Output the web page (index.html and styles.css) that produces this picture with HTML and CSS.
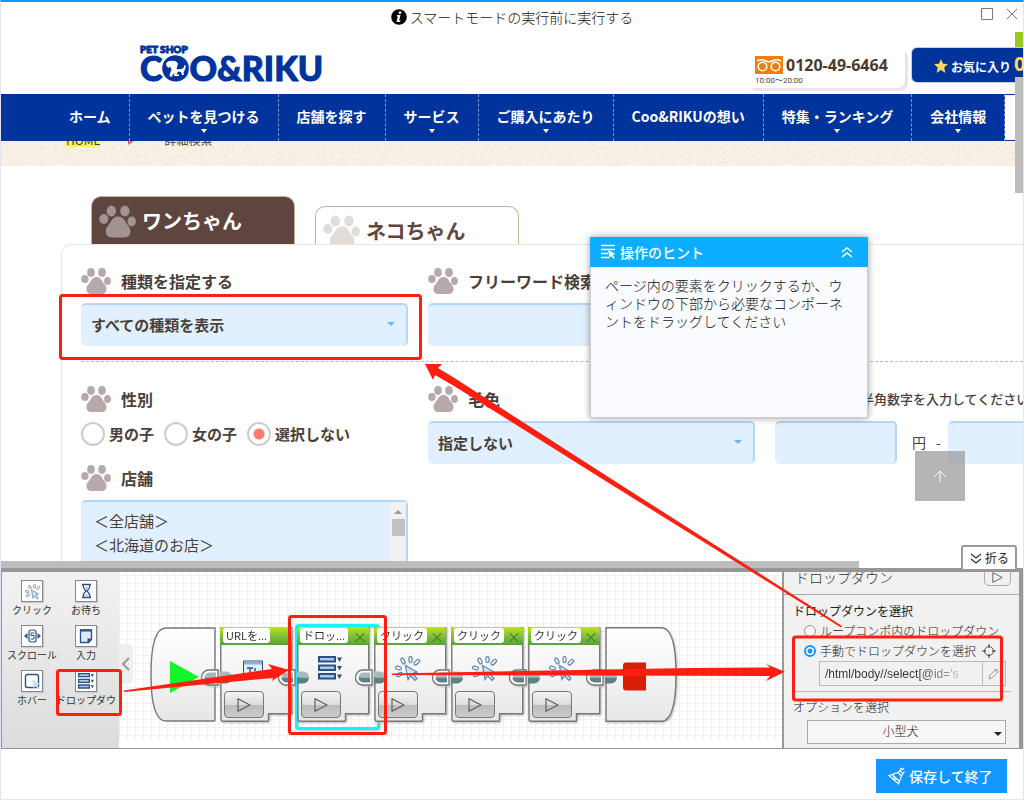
FILE: index.html
```html
<!DOCTYPE html>
<html lang="ja">
<head>
<meta charset="utf-8">
<title>スマートモードの実行前に実行する</title>
<link rel="stylesheet" href="styles.css">
</head>
<body>
<svg class="defs" aria-hidden="true">
  <defs>
    <linearGradient id="shell" x1="0" y1="0" x2="0" y2="1"><stop offset="0" stop-color="#fff"/><stop offset=".5" stop-color="#f4f4f4"/><stop offset="1" stop-color="#e6e6e6"/></linearGradient>
    <symbol id="paw" viewBox="0 0 30 26"><ellipse cx="10" cy="4.500" rx="3.800" ry="4.400"/><ellipse cx="21" cy="4.500" rx="3.800" ry="4.400"/><ellipse cx="3.900" cy="11" rx="3.700" ry="4"/><ellipse cx="26.500" cy="13" rx="3.400" ry="4"/><path d="M15.500 9c3 0 4.500 1.500 6 4.500 1.500 2.500 4 4 4 7.500 0 3.500-2 5-5 5h-10c-3 0-5-1.500-5-5 0-3.500 2.500-5 4-7.500 1.500-3 3-4.500 6-4.500z"/></symbol>
    <symbol id="click" viewBox="0 0 26 26"><g fill="#fff" stroke="#5b82b0" stroke-width="1.200"><rect x="14" y="0.600" width="3" height="6" rx="1.500"/><rect x="6.500" y="2" width="3" height="6" rx="1.500" transform="rotate(-28 8 5)"/><rect x="20.500" y="3" width="3" height="6.500" rx="1.500" transform="rotate(45 22 6)"/><rect x="2" y="9" width="3" height="6" rx="1.500" transform="rotate(-72 3.500 12)"/><rect x="3" y="15.500" width="3" height="6" rx="1.500" transform="rotate(65 4.500 18.500)"/><path fill="#d5e4f5" d="M10.500 9.500l11.500 6.500-4.500 1.500 4.500 5-2 2-4.500-5-2.500 4z"/></g></symbol>
    <symbol id="drop" viewBox="0 0 24 24"><path fill="#2c4f86" d="M0 0h18v6.500H0zM0 8.500h18V15H0zM0 17h18v6.500H0zM19 1.500h5L21.500 6zM19 10h5l-2.500 4.500zM19 18.500h5L21.500 23z"/><path fill="#aecbea" d="M2 2h14v2.500H2zM2 10.500h14V13H2zM2 19h14v2.500H2z"/></symbol>
    <symbol id="link" viewBox="0 0 32 17"><path d="M17 1H8a7.500 7.500 0 0 0 0 15h9z" fill="#fff" stroke="#777" stroke-width="1.300"/><path d="M15 3.500H8.500a5 5 0 0 0-5 5H15z" fill="#a9b8bb"/><path d="M3.500 8.500a5 5 0 0 0 5 5H15v-5z" fill="#5f8085"/><path d="M19 2.500h6a6 6 0 0 1 6 6H19z" fill="#a9b8bb"/><path d="M19 8.500h12a6 6 0 0 1-6 6h-6z" fill="#5f8085"/></symbol>
    <symbol id="block" viewBox="0 0 73 95"><path d="M.7.7h71v86H48.500v6.500q0 1-1 1H3q-2 0-2-2z" fill="url(#shell)" stroke="#777" stroke-width="1.400"/></symbol>
    <symbol id="play" viewBox="0 0 14 14"><path d="M1 .8L13 7 1 13.200z" fill="none" stroke="#555" stroke-width="1.100"/></symbol>
  </defs>
</svg>

<div class="app">
  <header class="titlebar">
    <h1 class="title"><svg width="16" height="16" viewBox="0 0 16 16"><circle cx="8" cy="8" r="7.800"/><path d="M8 2.500h2.500l-.5 2.200H7.500zM6.200 6h3.300l-1.300 5.500h1.300L9.200 13H5.500l1.300-5.500H5.800z" fill="#fff"/></svg>スマートモードの実行前に実行する</h1>
    <div class="window-buttons">
      <button aria-label="最大化"><svg width="12" height="12"><path d="M.5.5h11v11H.500z" fill="none" stroke="#777"/></svg></button>
      <button aria-label="閉じる"><svg width="12" height="12"><path d="M1 1l10 10M11 1L1 11" stroke="#777" fill="none"/></svg></button>
    </div>
  </header>

  <main class="webview">
    <div class="site-header">
      <a class="logo" href="#"><small>PET SHOP</small><span class="logo-name">CO<svg class="dog" width="26" height="26" viewBox="0 0 26 26"><circle cx="13" cy="13" r="12.500" fill="#00339b"/><path fill="#fff" d="M4 8.500Q6 5 10 6q4-1 6 2.500L14.500 14q4 1 7-1l1-3 1.500 1-1 3.500-1.500 3 .5 2.500h-2l-1-3-3-.5-1.500 3H17v1.500h-5l.5-3-2.500 2.500 1 1H7.500l.5-3 1.500-4-1.500-3-1.500 1.500L4.500 11z"/></svg>O&amp;RIKU</span></a>
      <div class="phone">
        <div class="phone-line"><svg width="28" height="18" viewBox="0 0 28 18"><path fill="#ef7f0a" d="M0 0h28v18H0z"/><g fill="none" stroke="#fff" stroke-width="1.600"><path d="M2 5q4-2.500 9 0 3 1.500 6 0 5-2.500 9 0"/><circle cx="7.500" cy="10.500" r="4.300"/><circle cx="20.500" cy="10.500" r="4.300"/></g></svg><b>0120-49-6464</b></div>
        <span class="hours">10:00〜20:00</span>
      </div>
      <a class="favorite" href="#"><svg width="14" height="14" viewBox="0 0 14 14"><path fill="#ffd95a" d="M7 0l2 4.700 5 .4-3.800 3.300L11.400 14 7 11l-4.400 3 1.200-5.600L0 5.100l5-.4z"/></svg>お気に入り<b>0</b></a>
    </div>

    <nav class="site-nav">
      <a href="#">ホーム</a><a class="more" href="#">ペットを見つける</a><a href="#">店舗を探す</a><a class="more" href="#">サービス</a><a class="more" href="#">ご購入にあたり</a><a href="#">Coo&amp;RIKUの想い</a><a class="more" href="#">特集・ランキング</a><a class="more" href="#">会社情報</a><span class="nav-end"></span>
    </nav>

    <div class="crumbs">
      <svg class="paper" width="100%" height="100%" aria-hidden="true"><filter id="grain"><feTurbulence type="fractalNoise" baseFrequency=".35" numOctaves="2"/><feColorMatrix values="0 0 0 0 .8  0 0 0 0 .68  0 0 0 0 .5  .5 .5 0 0 -.4"/></filter><rect width="100%" height="100%" filter="url(#grain)"/></svg>
      <a href="#">HOME</a><i></i><span>詳細検索</span>
    </div>

    <div class="search">
      <div class="tabs">
        <button class="tab active"><svg width="37" height="33"><use href="#paw"/></svg>ワンちゃん</button>
        <button class="tab"><svg width="37" height="33"><use href="#paw"/></svg>ネコちゃん</button>
      </div>
      <form class="panel">
        <div class="fields first">
          <div>
            <label class="heading" for="kind"><svg width="30" height="26"><use href="#paw"/></svg>種類を指定する</label>
            <div class="pick"><select id="kind" class="field"><option>すべての種類を表示</option></select></div>
          </div>
          <div>
            <label class="heading" for="word"><svg width="30" height="26"><use href="#paw"/></svg>フリーワード検索</label>
            <input id="word" class="field" type="text">
          </div>
        </div>
        <div class="fields">
          <div>
            <div class="heading"><svg width="30" height="26"><use href="#paw"/></svg>性別</div>
            <div class="radios">
              <label><input type="radio" name="sex">男の子</label>
              <label><input type="radio" name="sex">女の子</label>
              <label><input type="radio" name="sex" checked>選択しない</label>
            </div>
            <label class="heading" for="shop"><svg width="30" height="26"><use href="#paw"/></svg>店舗</label>
            <div class="list"><select id="shop" class="field" multiple><option>＜全店舗＞</option><option>＜北海道のお店＞</option></select><span class="list-scroll"><i></i></span></div>
          </div>
          <div>
            <label class="heading" for="color"><svg width="30" height="26"><use href="#paw"/></svg>毛色</label>
            <div class="pick"><select id="color" class="field"><option>指定しない</option></select></div>
          </div>
          <div>
            <label class="heading note" for="low">半角数字を入力してください</label>
            <div class="price"><input id="low" class="field" type="text"><span>円</span><span>-</span><input class="field" type="text" aria-label="上限"></div>
          </div>
        </div>
      </form>
    </div>

    <button class="to-top" aria-label="上へ"><svg width="14" height="12"><path d="M7 12V1M1 7l6-6 6 6" fill="none" stroke="#fff"/></svg></button>
    <span class="v-mark"></span><span class="v-thumb"></span>
    <button class="fold"><svg width="12" height="12"><path d="M1 1l5 4 5-4M1 6l5 4 5-4" fill="none" stroke="#333" stroke-width="1.300"/></svg>折る</button>
  </main>
  <div class="h-scroll"><span></span></div>

  <section class="editor">
    <div class="palette">
      <button><svg width="22" height="22"><use href="#click" x="3" y="3" width="16" height="16"/></svg>クリック</button>
      <button><svg width="22" height="22"><path d="M6 3.500h9M6 16.500h9M7 4c0 3.500 1.500 4.500 3 6-1.500 1.500-3 2.500-3 6M14 4c0 3.500-1.500 4.500-3 6 1.500 1.500 3 2.500 3 6" fill="none" stroke="#2c4f86" stroke-width="1.300"/><path d="M8.500 6h4L10.500 9zM8.500 15.500l2-3 2 3z" fill="#a9c6e8"/></svg>お待ち</button>
      <button><svg width="22" height="22"><rect x="7" y="4" width="7" height="12" rx="2" fill="#fff" stroke="#2c4f86" stroke-width="1.200"/><path d="M12.500 7H9v2.500h3V13H8.500" fill="none" stroke="#2c4f86"/><path d="M5.500 7v6L2 10zM15.500 7v6l3.500-3z" fill="#2c4f86"/></svg>スクロール</button>
      <button><svg width="22" height="22"><path d="M4.500 4h11v9.500l-3 3h-8z" fill="#dce9f7" stroke="#2c4f86" stroke-width="1.300"/><path d="M4 4.500h12M12.500 16.500v-3h3" fill="none" stroke="#2c4f86" stroke-width="2"/></svg>入力</button>
      <button><svg width="22" height="22"><rect x="3.500" y="3.500" width="13" height="13" rx="2" fill="#fff" stroke="#2c4f86" stroke-width="1.400"/><path d="M10 8.500l8 4.500-3 1 2.500 3.500-1.500 1-2.500-3.500-2 2.500z" fill="#c9ddf3"/></svg>ホバー</button>
      <button><svg width="22" height="22"><use href="#drop" x="2" y="2" width="16" height="16"/></svg>ドロップダウ</button>
    </div>

    <div class="canvas">
      <button class="collapse" aria-label="たたむ"><svg width="8" height="14"><path d="M7 1L1 7l6 6" fill="none" stroke="#999" stroke-width="2"/></svg></button>
      <div class="flow">
        <svg class="start" width="66" height="95"><path d="M65 1v92q0 1-1 1H16Q1 94 1 47.500 1 1 16 1z" fill="url(#shell)" stroke="#777" stroke-width="1.400"/><path d="M20 34l29 16-29 16z" fill="#12f52a"/></svg>
        <article class="node"><svg class="shell"><use href="#block"/></svg><header><span>URLを...</span></header><svg class="link"><use href="#link"/></svg><svg class="glyph" width="24" height="26"><path d="M2.500 5h19v16h-19z" fill="#e3edf8" stroke="#2c4f86"/><path d="M3 5.500h18v3H3z" fill="#8fb0d6"/><path d="M6 12h6M9 12v6M6 18h6M14 12v3M14 18h4" stroke="#2c4f86" stroke-width="1.400"/></svg><button class="run" aria-label="実行"><svg width="14" height="14"><use href="#play"/></svg></button></article>
        <article class="node selected"><svg class="shell"><use href="#block"/></svg><header><span>ドロッ...</span><button aria-label="削除">×</button></header><svg class="link"><use href="#link"/></svg><svg class="glyph" width="24" height="24"><use href="#drop"/></svg><button class="run" aria-label="実行"><svg width="14" height="14"><use href="#play"/></svg></button></article>
        <article class="node"><svg class="shell"><use href="#block"/></svg><header><span>クリック</span><button aria-label="削除">×</button></header><svg class="link"><use href="#link"/></svg><svg class="glyph" width="26" height="26"><use href="#click"/></svg><button class="run" aria-label="実行"><svg width="14" height="14"><use href="#play"/></svg></button></article>
        <article class="node"><svg class="shell"><use href="#block"/></svg><header><span>クリック</span><button aria-label="削除">×</button></header><svg class="link"><use href="#link"/></svg><svg class="glyph" width="26" height="26"><use href="#click"/></svg><button class="run" aria-label="実行"><svg width="14" height="14"><use href="#play"/></svg></button></article>
        <article class="node"><svg class="shell"><use href="#block"/></svg><header><span>クリック</span><button aria-label="削除">×</button></header><svg class="link"><use href="#link"/></svg><svg class="glyph" width="26" height="26"><use href="#click"/></svg><button class="run" aria-label="実行"><svg width="14" height="14"><use href="#play"/></svg></button></article>
        <div class="node end"><svg width="72" height="95"><path d="M1 .7h56Q71 2 71 47.500 71 93 57 94.300H1z" fill="url(#shell)" stroke="#777" stroke-width="1.400"/><path d="M21 35.500h20v28H21q-3 0-3-3v-22q0-3 3-3z" fill="#d81e06"/></svg><svg class="link"><use href="#link"/></svg></div>
      </div>
    </div>

    <aside class="props">
      <div class="props-head"><h2>ドロップダウン</h2><button aria-label="実行"><svg width="11" height="11"><use href="#play"/></svg></button></div>
      <div class="props-body">
        <p>ドロップダウンを選択</p>
        <label class="choice"><input type="radio" name="target">ループコンポ内のドロップダウン</label>
        <label class="choice"><input type="radio" name="target" checked>手動でドロップダウンを選択<svg width="14" height="14"><circle cx="7" cy="7" r="4.500" fill="none" stroke="#555"/><path d="M7 0v4M7 10v4M0 7h4M10 7h4" stroke="#333"/></svg></label>
        <div class="xpath"><input type="text" aria-label="XPath" value="/html/body//select[@id='s"><button aria-label="編集"><svg width="12" height="12"><path d="M1 11l1-4 6-6 2.500 2.500-6 6zM7 2l2.500 2.500" fill="none" stroke="#999"/></svg></button></div>
        <hr>
        <label class="opt-label" for="option">オプションを選択</label>
        <div class="pick option"><select id="option"><option>小型犬</option></select></div>
      </div>
    </aside>
  </section>

  <footer class="footer">
    <button class="save"><svg width="18" height="18" viewBox="0 0 18 18"><g fill="none" stroke="#fff" stroke-width="1.200"><path d="M1 8.500l9-3 3.500 3.500-3 8zM4.500 8l6.500 6M4 11.500l4-1M6 13l3-1.500M10 5.500l2-2 3 3-1.500 2.500M12 3.500l1-2 1.500 1 1.500-1.500M15 6.500l1.500-2"/></g></svg>保存して終了</button>
  </footer>

  <aside class="hint">
    <header><svg width="16" height="16" viewBox="0 0 16 16"><path d="M1 1.500h14M1 5.500h14M1 9.500h7M1 13.500h8" stroke="#fff" stroke-width="1.500"/><path d="M8 6l7.500 4-2.800 1 2 2.800-1.400 1-2-2.800L9.500 14z" fill="#fff"/></svg>操作のヒント<button aria-label="折りたたむ"><svg width="12" height="12"><path d="M1 6l5-4 5 4M1 11l5-4 5 4" fill="none" stroke="#fff" stroke-width="1.500"/></svg></button></header>
    <p>ページ内の要素をクリックするか、ウィンドウの下部から必要なコンポーネントをドラッグしてください</p>
  </aside>

  <svg class="callouts" width="1024" height="800" aria-hidden="true">
    <g fill="none" stroke="#ff1e10" stroke-width="3"><rect x="60.500" y="295.500" width="360" height="63" rx="2"/><rect x="57.500" y="670.500" width="63" height="44" rx="2"/><rect x="289.500" y="616.500" width="96" height="117" rx="2"/><rect x="793.500" y="637" width="208" height="63" rx="2"/></g>
    <g fill="#ff1e10"><path d="M425 364h17l-4 4 18 11 157 101 229 146-1 1.500L604 480 454 386l-19-11-2 5z"/><path d="M289 670l-21-6 4 5-148 21.500v1.500l149-14-1 3z"/><path d="M785 671.700L766 664l4 3.500-80 .5-298 5.500v1.500l378 1-4 5z"/></g>
  </svg>
</div>
</body>
</html>
```
FILE: styles.css
```css
* { box-sizing: border-box; }
body {
  margin: 0;
  font-family: "Noto Sans CJK JP", sans-serif;
  font-size: 12px;
  color: #333;
  background: #fff;
}
button, input, select { font: inherit; color: inherit; margin: 0; padding: 0; border: 0; background: none; border-radius: 0; }
a { color: inherit; text-decoration: none; }
h1, h2, p { margin: 0; font-weight: 400; }
svg { display: block; flex: none; }
.defs { position: absolute; width: 0; height: 0; }

.app {
  position: relative;
  display: flex;
  flex-direction: column;
  height: 100vh;
  border: 1px solid #e1e5f0;
  border-top: 2px solid #1296ff;
  overflow: hidden;
}

/* window title */
.titlebar { display: flex; align-items: center; height: 30px; position: relative; justify-content: center; flex: none; }
.title { display: flex; align-items: center; gap: 3px; font-size: 14px; color: #111; font-weight: 300; }
.window-buttons { position: absolute; right: 5px; top: 6px; display: flex; gap: 13px; }

/* embedded page */
.webview { flex: 1; min-height: 0; position: relative; overflow: clip; overflow-clip-margin: 8px; color: #4b4039; display: flex; flex-direction: column; }
.site-header { display: flex; height: 62px; flex: none; align-items: flex-start; padding-left: 139px; }
.logo { width: 606px; flex: none; color: #00339b; padding-top: 12px; font-family: Lato, sans-serif; font-weight: 900; }
.logo small { display: block; font-size: 10px; line-height: 10px; -webkit-text-stroke: 1px #00339b; }
.logo-name { display: block; position: relative; font-size: 34px; line-height: 27px; -webkit-text-stroke: 1px #00339b; }
.dog { position: absolute; left: 22px; top: 1px; }
.phone { width: 159px; flex: none; height: 41px; margin-top: 15px; padding: 8px 0 0 9px; border-radius: 8px; box-shadow: 3px 3px 0 #e6e6e6; background: #fff; }
.phone-line { display: flex; gap: 3px; align-items: center; height: 20px; }
.phone-line b { font: 700 16px/20px "Open Sans", sans-serif; color: #4b3a2c; }
.hours { display: block; font: 8px/11px Roboto, "Noto Sans CJK JP", sans-serif; }
.favorite { display: flex; align-items: center; gap: 3px; flex: none; margin: 16px 0 0 7px; width: 140px; height: 34px; padding: 2px 0 0 22px; border-radius: 5px; background: #00339b; box-shadow: 0 0 0 1px #c5cfe3; color: #fff; font-weight: 700; font-size: 12px; }
.favorite b { font: 700 20px/24px "Noto Sans", sans-serif; color: #ffd95a; margin-top: -4px; }

.site-nav { display: flex; flex: none; height: 47px; padding-left: 50px; background: #00339b; color: #fff; font-size: 14px; font-weight: 700; line-height: 44px; white-space: nowrap; }
.site-nav a { position: relative; padding: 0 18px; border-right: 1px dashed #7f99cd; }
.more::after { content: ""; position: absolute; left: 50%; top: 35px; margin-left: -3px; border: 3px solid transparent; border-top: 4px solid #fff; border-bottom: 0; }
.nav-end { flex: 1; margin: 1px 0; background: #fff; }

.crumbs { position: relative; display: flex; align-items: flex-start; flex: none; height: 25px; padding-left: 65px; background: #f8f2e8; overflow: hidden; line-height: 14px; }
.paper { position: absolute; left: 0; top: 0; }
.crumbs a, .crumbs span { position: relative; margin-top: -8px; }
.crumbs a { background: #ffee60; }
.crumbs i { position: relative; margin: -4px 30px 0 28px; border: 4px solid transparent; border-left: 6px solid #ff5a5a; border-right: 0; }

.search { flex: 1; min-height: 0; overflow: hidden; padding: 30px 0 0 60px; white-space: nowrap; }
.tabs { display: flex; gap: 20px; align-items: flex-end; height: 48px; padding-left: 30px; }
.tab { display: flex; gap: 6px; width: 204px; height: 38px; padding: 8px 7px 0; border: 1px solid #c9b49b; border-bottom: 0; border-radius: 10px 10px 0 0; font-size: 20px; font-weight: 700; line-height: 32px; overflow: hidden; color: #5f4540; }
.tab svg { fill: #e2dcda; }
.tab.active { height: 48px; background: #5f4540; color: #fff; }
.tab.active svg { fill: #a29390; }
.panel { border: 1px solid #eee4da; border-right: 0; border-bottom: 0; border-radius: 10px 0 0; padding: 14px 0 0 19px; }
.fields { display: grid; grid-template-columns: 327px 327px 1fr; gap: 20px; }
.fields.first { padding-bottom: 15px; margin-bottom: 15px; border-bottom: 1px dashed #c9b8a4; }
.fields > div { min-width: 0; }
.heading { display: flex; align-items: center; gap: 10px; height: 44px; font-size: 16px; line-height: 22px; font-weight: 700; }
.heading svg { fill: #b7a9a9; }
.heading.note { font-size: 13px; font-weight: 500; padding-left: 86px; }
.field { display: block; width: 100%; height: 43px; padding: 0 10px 3px; border-top: 2px solid #b3d6ff; border-right: 2px solid #b3d6ff; border-radius: 5px; background: #e1f0ff; font-size: 15px; font-weight: 700; }
select { appearance: none; }
.pick { position: relative; }
.pick::after { content: ""; position: absolute; right: 13px; top: 19px; border: 4px solid transparent; border-top: 4px solid #6db5f7; border-bottom: 0; pointer-events: none; }
.radios { display: flex; gap: 10px; height: 35px; font-size: 15px; line-height: 20px; font-weight: 700; }
.radios label { display: flex; align-items: center; gap: 4px; height: 26px; }
.radios input { appearance: none; width: 24px; height: 24px; border: 2px solid #ccc; border-radius: 50%; background: #fff; }
.radios input:checked { background: radial-gradient(circle, #ff7b70 5px, #fff 6px); }
.list { position: relative; }
.list .field { height: 100px; padding: 8px 11px; overflow: hidden; }
.list option { height: 24px; line-height: 24px; padding: 0 2px; }
.list-scroll { position: absolute; right: 2px; top: 2px; width: 16px; height: 98px; padding: 8px 1px 0 2px; background: #f1f1f1; }
.list-scroll::before { content: ""; display: block; width: 0; margin: 0 2px 5px; border: 4px solid transparent; border-top: 0; border-bottom: 4px solid #999; }
.list-scroll i { display: block; height: 17px; background: #c1c1c1; }
.price { display: flex; }
.price .field { width: 122px; flex: none; }
.price span { font-size: 14px; line-height: 43px; padding-left: 15px; }
.price span + span { padding: 0 7px 0 10px; }

.to-top { position: absolute; right: 58px; bottom: 60px; width: 50px; height: 50px; display: grid; place-items: center; background: rgba(150, 150, 150, .7); }
.v-mark, .v-thumb { position: absolute; right: 0; width: 8px; }
.v-mark { top: 0; height: 15px; background: #97cb21; }
.v-thumb { top: 45px; height: 116px; background: #bdbdbd; }
.fold { position: absolute; right: 6px; bottom: -8px; z-index: 1; display: flex; align-items: flex-start; gap: 3px; width: 56px; height: 24px; padding: 5px 0 0 7px; border: 2px solid #999; border-bottom: 0; border-radius: 3px 3px 0 0; background: #fff; color: #222; line-height: 12px; }
.fold svg { margin-top: 1px; }
.h-scroll { flex: none; height: 11px; background: #fff; border-bottom: 4px solid #979797; position: relative; }
.h-scroll span { display: block; width: 84%; height: 7px; background: #bdbdbd; }

/* workflow editor */
.editor { display: flex; flex: none; height: 177px; border: 1px solid #979797; border-top: 0; }
.palette { display: grid; grid-template-columns: 54px 54px; grid-auto-rows: 45px; width: 117px; flex: none; padding: 8px 3px; background: linear-gradient(#f2f2f2, #dcdcdc); overflow: hidden; }
.palette button { display: flex; flex-direction: column; align-items: center; font-size: 10px; line-height: 14px; white-space: nowrap; color: #333; }
.palette svg { border: 1px solid #888; background: #fff; margin-bottom: 1px; box-shadow: 1px 1px 1px #ccc; }

.canvas { position: relative; flex: 1; min-width: 0; padding: 55px 0 0 31px; background: linear-gradient(#fff, #fff) 0 100% / 100% 8px no-repeat, linear-gradient(#f0f0f0 1px, transparent 1px) 0 3px / 8px 8px, linear-gradient(90deg, #f0f0f0 1px, transparent 1px) 0 0 / 8px 8px; }
.collapse { position: absolute; left: 0; top: 72px; width: 14px; height: 40px; display: grid; place-items: center; background: #eee; border-radius: 0 5px 5px 0; }
.flow { display: flex; gap: 5px; width: max-content; }
.start { margin-right: -1px; }
.node { position: relative; width: 72px; height: 94px; filter: drop-shadow(1px 1px 1px #bbb); }
.shell { position: absolute; left: 0; top: 0; width: 73px; height: 95px; }
.node header { position: relative; display: flex; align-items: center; justify-content: space-between; height: 18px; padding: 1px 2px 2px 3px; background: linear-gradient(#c3e60d, #8cc63a 40%, #55a03a); border-radius: 2px 2px 0 0; white-space: nowrap; }
.node header span { padding: 0 3px; background: #fff; border-radius: 3px; font-size: 11px; line-height: 15px; }
.node header button { color: #477a26; font-size: 14px; line-height: 14px; }
.link { position: absolute; left: -19px; top: 42px; width: 32px; height: 17px; }
.glyph { position: absolute; left: 21px; top: 29px; }
.run { position: absolute; left: 4px; top: 64px; width: 40px; height: 27px; display: grid; place-items: center; border: 1px solid #777; border-radius: 4px; background: linear-gradient(#f3f3f3, #ddd 50%, #bbb 51%, #ccc); }
.selected::before { content: ""; position: absolute; left: -2px; top: -3px; width: 79px; height: 100px; border: 3px solid #12f4f7; border-radius: 4px; }

.props { width: 240px; flex: none; border-left: 2px solid #999; border-right: 3px solid #999; background: #f1f1f1; }
.props-head { display: flex; justify-content: space-between; align-items: flex-start; height: 23px; padding: 0 8px 0 11px; border-bottom: 1px solid #aaa; overflow: hidden; }
.props h2 { font-size: 14px; line-height: 20px; margin-top: -5px; font-weight: 300; }
.props-head button { width: 27px; height: 20px; margin-top: -6px; padding-top: 3px; display: grid; place-items: center; border: 1px solid #aaa; border-radius: 5px; }
.props-body { padding: 6px 8px 0 9px; line-height: 20px; font-weight: 300; color: #222; }
.choice { display: flex; align-items: center; gap: 4px; height: 20px; padding-left: 11px; white-space: nowrap; }
.choice input { appearance: none; flex: none; width: 12px; height: 12px; border: 1px solid #999; border-radius: 50%; background: #f8f8f8; }
.choice input:checked { border: 2px solid #1296ff; background: radial-gradient(circle, #1296ff 2px, #fff 3px); }
.choice svg { margin-left: 2px; }
.xpath { display: flex; height: 25px; margin-left: 26px; width: 187px; border: 1px solid #bbb; }
.xpath input { width: 163px; padding-left: 5px; border-right: 1px solid #bbb; font: 12px "Liberation Sans", sans-serif; color: transparent; background: linear-gradient(90deg, #333 60%, #bbb 85%); background-clip: text; }
.xpath button { flex: 1; display: grid; place-items: center; }
.props hr { margin: 5px 0 5px; border: 0; border-top: 1px solid #bbb; }
.opt-label { display: block; }
.option { margin: 3px 0 0 14px; width: 199px; }
.option select { width: 100%; height: 24px; padding: 0 12px 2px 0; border: 1px solid #aaa; text-align: center; text-align-last: center; background: #f7f7f7; }
.option::after { right: 4px; top: 12px; border-top-color: #222; }

.footer { flex: none; height: 50px; padding: 10px 16px 0; display: flex; justify-content: flex-end; align-items: flex-start; }
.save { display: flex; align-items: center; gap: 3px; width: 131px; height: 34px; padding-left: 12px; background: #1296ff; color: #fff; font-size: 14px; font-weight: 500; }

/* floating hint */
.hint { position: absolute; left: 589px; top: 235px; width: 278px; height: 181px; background: #fafbff; border: 1px solid #ccc; border-top: 0; box-shadow: 0 0 7px rgba(0, 0, 0, .4); color: #111; }
.hint header { display: flex; align-items: center; gap: 4px; height: 30px; margin: 0 -1px; padding: 0 15px 1px 10px; background: #0daeff; color: #fff; font-size: 14px; font-weight: 500; }
.hint header button { margin-left: auto; }
.hint p { padding: 9px 0 0 14px; width: 270px; font-size: 14px; line-height: 18px; font-weight: 300; max-width: 256px; }

.callouts { position: absolute; left: -1px; top: -2px; pointer-events: none; }
```
